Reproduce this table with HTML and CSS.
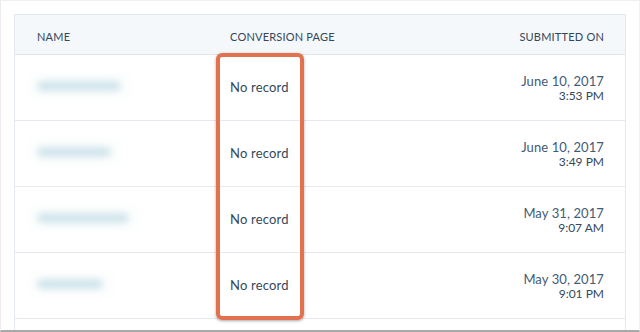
FILE: index.html
```html
<!DOCTYPE html>
<html>
<head>
<meta charset="utf-8">
<link rel="stylesheet" href="styles.css">
</head>
<body>
<div class="frame">
  <div class="table">
    <div class="row head">
      <div class="c name">NAME</div>
      <div class="c page">CONVERSION PAGE</div>
      <div class="c date">SUBMITTED ON</div>
    </div>
    <div class="row">
      <div class="c name"><span class="halo"><span class="blur" style="width:84px"></span></span></div>
      <div class="c page">No record</div>
      <div class="c date"><div class="d">June 10, 2017</div><div class="t">3:53 PM</div></div>
    </div>
    <div class="row">
      <div class="c name"><span class="halo"><span class="blur" style="width:74px"></span></span></div>
      <div class="c page">No record</div>
      <div class="c date"><div class="d">June 10, 2017</div><div class="t">3:49 PM</div></div>
    </div>
    <div class="row">
      <div class="c name"><span class="halo"><span class="blur" style="width:92px"></span></span></div>
      <div class="c page">No record</div>
      <div class="c date"><div class="d">May 31, 2017</div><div class="t">9:07 AM</div></div>
    </div>
    <div class="row">
      <div class="c name"><span class="halo"><span class="blur" style="width:66px"></span></span></div>
      <div class="c page">No record</div>
      <div class="c date"><div class="d">May 30, 2017</div><div class="t">9:01 PM</div></div>
    </div>
    <div class="row last"></div>
  </div>
  <div class="highlight"></div>
</div>
</body>
</html>
```
FILE: styles.css
```css
* { box-sizing: border-box; }
html, body { margin: 0; padding: 0; background: #fff; }
body { font-family: Lato, "Open Sans", sans-serif; color: #33475b; }
.frame {
  position: relative;
  width: 640px;
  height: 332px;
  overflow: hidden;
  border-top: 1px solid #f0f0f0;
  border-left: 1px solid #ececec;
  border-right: 1px solid #f2f2f2;
  border-bottom: 2px solid #a8a8a8;
  padding: 13px 13px 0 13px;
  background: #fff;
}
.table {
  border: 1px solid #e3e8ef;
  border-bottom: none;
  height: 330px;
}
.row {
  display: flex;
  align-items: center;
  height: 66px;
  border-bottom: 1px solid #e6eaf0;
}
.row.head {
  height: 40px;
  background: #f5f8fa;
  border-bottom: 1px solid #dfe3eb;
  font-size: 11px;
  letter-spacing: 0.2px;
  padding-top: 3px;
}
.c.name { width: 215px; padding-left: 22px; }
.c.page { width: 200px; font-size: 13px; letter-spacing: 0.2px; padding-bottom: 1px; }
.head .c.page { font-size: 11px; letter-spacing: 0.2px; padding-bottom: 0; }
.c.date { flex: 1; text-align: right; padding-right: 21px; }
.d { font-size: 13px; line-height: 16px; color: #425b76; letter-spacing: 0.1px; }
.t { font-size: 12px; line-height: 14px; color: #33475b; }
.halo {
  display: inline-block;
  margin-left: -9px;
  padding: 10px 12px 10px 9px;
  background: #fdfefe;
  border-radius: 8px;
}
.blur {
  display: block;
  height: 10px;
  background: #cfe4eb;
  border-radius: 5px;
  filter: blur(3.5px);
}
.highlight {
  position: absolute;
  left: 215px;
  top: 52px;
  width: 88px;
  height: 267px;
  border: 4px solid #e2714f;
  border-radius: 6px;
  box-shadow: 0 1px 3px rgba(0,0,0,0.35);
}
```
